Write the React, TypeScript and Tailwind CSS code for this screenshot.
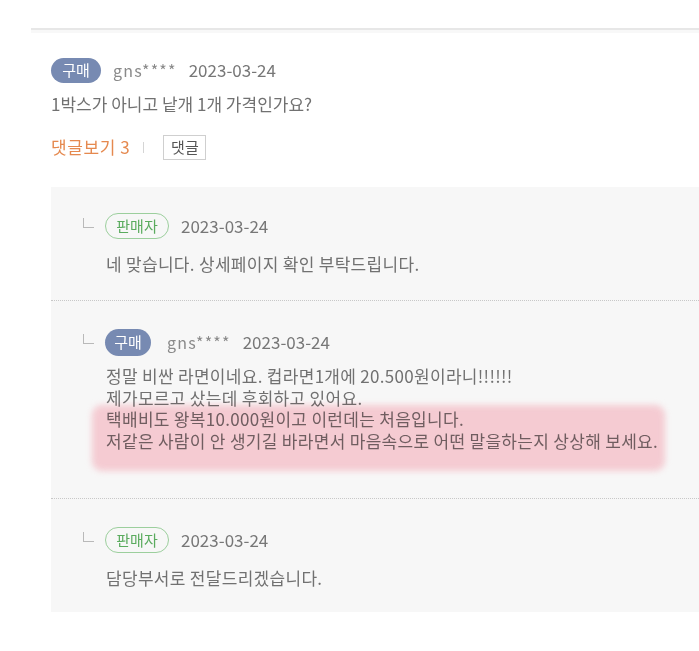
import React from "react";

const font = "font-['Noto_Sans_CJK_KR','Noto_Sans',sans-serif]";

function Corner() {
  return <span className="mt-[-6px] mr-[11px] block h-[10px] w-[11px] border-b border-l border-[#b9b9b9]" />;
}

function BuyBadge({ w = 50, h = 25 }: { w?: number; h?: number }) {
  return (
    <span
      className="flex items-center justify-center rounded-full bg-[#778ab2] text-[15px] text-white"
      style={{ width: w, height: h }}
    >
      구매
    </span>
  );
}

function SellerBadge() {
  return (
    <span className="flex h-[26px] w-[64px] items-center justify-center rounded-full border-[1.5px] border-[#9ccf9d] text-[15px] text-[#5aab5e]">
      판매자
    </span>
  );
}

const body = "text-[17px] tracking-[0.3px] text-[#717171]";

export default function App() {
  return (
    <div className={`relative h-[651px] w-[699px] overflow-hidden bg-white ${font}`}>
      <div className="pl-[31px] pt-[28px]">
        <div className="h-[2px] bg-[#e7e7e7]" />
        <div className="h-[3px] bg-[#f8f8f8]" />
      </div>
      <div className="pl-[51px]">
        {/* first comment */}
        <div className="mt-[24px] flex h-[26px] items-center">
          <BuyBadge />
          <span className="ml-[12px] text-[16px] tracking-[1.2px] text-[#8a8a8a]">gns****</span>
          <span className="ml-[12px] text-[17px] text-[#777]">2023-03-24</span>
        </div>
        <p className="mt-[10px] h-[22px] text-[17px] leading-[22px] text-[#717171]">
          1박스가 아니고 낱개 1개 가격인가요?
        </p>
        <div className="mt-[19px] flex h-[26px] items-center">
          <span className="text-[17px] tracking-[0.6px] text-[#e5894f]">댓글보기 3</span>
          <span className="ml-[13px] h-[11px] w-px bg-[#d5d5d5]" />
          <span className="ml-[19px] flex h-[25px] w-[43px] items-center justify-center border border-[#cfcfcf] text-[15px] text-[#555]">
            댓글
          </span>
        </div>

        {/* replies panel */}
        <div className="mt-[27px] bg-[#f7f7f7]">
          {/* reply 1 */}
          <div className="pl-[32px] pt-[26px] pb-[25px]">
            <div className="flex h-[26px] items-center">
              <Corner />
              <SellerBadge />
              <span className="ml-[12px] text-[17px] text-[#777]">2023-03-24</span>
            </div>
            <p className={`mt-[14px] pl-[23px] leading-[22px] ${body}`}>
              네 맞습니다. 상세페이지 확인 부탁드립니다.
            </p>
          </div>
          <div className="border-t border-dotted border-[#c8c8c8]" />

          {/* reply 2 */}
          <div className="pl-[32px] pt-[28px] pb-[47px]">
            <div className="flex h-[26px] items-center">
              <Corner />
              <BuyBadge w={46} h={27} />
              <span className="ml-[16px] text-[16px] tracking-[1.2px] text-[#8a8a8a]">gns****</span>
              <span className="ml-[12px] text-[17px] text-[#777]">2023-03-24</span>
            </div>
            <div className={`relative mt-[10px] pl-[23px] leading-[21.5px] ${body}`}>
              <p>정말 비싼 라면이네요. 컵라면1개에 20.500원이라니!!!!!!</p>
              <p>제가모르고 샀는데 후회하고 있어요.</p>
              <p>택배비도 왕복10.000원이고 이런데는 처음입니다.</p>
              <p>저같은 사람이 안 생기길 바라면서 마음속으로 어떤 말을하는지 상상해 보세요.</p>
              <div className="pointer-events-none absolute left-[9px] top-[40px] h-[66px] w-[573px] rounded-[10px] bg-[#fbb4c0] opacity-60 mix-blend-multiply blur-[3px]" />
            </div>
          </div>
          <div className="border-t border-dotted border-[#c8c8c8]" />

          {/* reply 3 */}
          <div className="pl-[32px] pt-[28px] pb-[23px]">
            <div className="flex h-[26px] items-center">
              <Corner />
              <SellerBadge />
              <span className="ml-[12px] text-[17px] text-[#777]">2023-03-24</span>
            </div>
            <p className={`mt-[14px] pl-[23px] leading-[22px] ${body}`}>
              담당부서로 전달드리겠습니다.
            </p>
          </div>
        </div>
      </div>
    </div>
  );
}
